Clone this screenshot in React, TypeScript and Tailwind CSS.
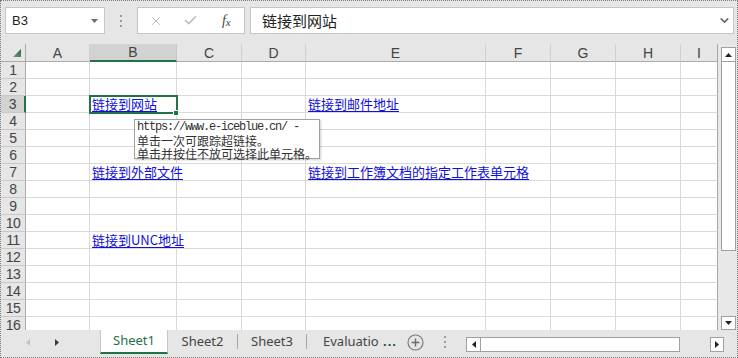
import { Check, X, ChevronDown } from "lucide-react";

const COLS = [
  { key: "A", w: "w-[64px]" },
  { key: "B", w: "w-[87px]" },
  { key: "C", w: "w-[65px]" },
  { key: "D", w: "w-[64px]" },
  { key: "E", w: "w-[180px]" },
  { key: "F", w: "w-[65px]" },
  { key: "G", w: "w-[65px]" },
  { key: "H", w: "w-[65px]" },
  { key: "I", w: "w-[37px]" },
];

// hyperlink cells, keyed by row then column
const LINKS: Record<number, Record<string, string>> = {
  3: { B: "链接到网站", E: "链接到邮件地址" },
  7: { B: "链接到外部文件", E: "链接到工作簿文档的指定工作表单元格" },
  11: { B: "链接到UNC地址" },
};

const ROWS = Array.from({ length: 16 }, (_, i) => i + 1);

function VDots() {
  return (
    <div className="flex flex-col items-center gap-[3px]">
      <span className="h-[2px] w-[2px] bg-[#9a9a9a]" />
      <span className="h-[2px] w-[2px] bg-[#9a9a9a]" />
      <span className="h-[2px] w-[2px] bg-[#9a9a9a]" />
    </div>
  );
}

function Tri({ dir, color }: { dir: "up" | "down" | "left" | "right"; color: string }) {
  const pts = {
    up: "0,4 7,4 3.5,0",
    down: "0,0 7,0 3.5,4",
    left: "4,0 4,7 0,3.5",
    right: "0,0 0,7 4,3.5",
  }[dir];
  const horiz = dir === "left" || dir === "right";
  return (
    <svg width={horiz ? 4 : 7} height={horiz ? 7 : 4} viewBox={horiz ? "0 0 4 7" : "0 0 7 4"}>
      <polygon points={pts} fill={color} />
    </svg>
  );
}

function FormulaBar() {
  return (
    <div className="flex h-[43px] items-start pt-[6px]">
      <div className="ml-[4px] flex h-[27px] w-[100px] items-center justify-between border border-[#c6c6c6] bg-white pl-[6px] pr-[6px]">
        <span className="text-[13px] text-[#222]">B3</span>
        <Tri dir="down" color="#6b6b6b" />
      </div>
      <div className="flex h-[27px] w-[32px] items-center justify-center">
        <VDots />
      </div>
      <div className="flex h-[27px] w-[108px] items-center border border-[#c6c6c6] bg-white">
        <div className="flex w-[36px] justify-center">
          <X size={14} strokeWidth={1.4} color="#a8a8a8" />
        </div>
        <div className="flex w-[36px] justify-center">
          <Check size={15} strokeWidth={2.6} color="#bdbdbd" />
        </div>
        <div className="flex w-[36px] justify-center font-['Liberation_Serif',serif] italic text-[#444]">
          <span className="text-[14px] leading-none">f</span>
          <span className="mt-[3px] text-[11px] leading-none">x</span>
        </div>
      </div>
      <div className="ml-[5px] flex h-[27px] w-[484px] items-center justify-between border border-[#c6c6c6] bg-white pl-[11px] pr-[2px]">
        <span className="font-['Noto_Sans_CJK_SC',sans-serif] text-[15px] leading-none text-[#222]">
          链接到网站
        </span>
        <ChevronDown size={13} strokeWidth={3} color="#6a6a6a" />
      </div>
    </div>
  );
}

function Grid() {
  return (
    <div className="h-full w-[717px] overflow-hidden bg-white">
      <div className="flex h-[18px] bg-[#e6e6e6]">
        <div className="flex h-full w-[25px] items-start border-r border-b border-[#ababab]">
          <svg width="24" height="17" viewBox="0 0 24 17">
            <defs>
              <linearGradient id="corner" x1="0" y1="1" x2="1" y2="0">
                <stop offset="0" stopColor="#6f9a7c" />
                <stop offset="1" stopColor="#1e6b3c" />
              </linearGradient>
            </defs>
            <polygon points="20,5 20,13 12,13" fill="url(#corner)" />
          </svg>
        </div>
        {COLS.map((c) => (
          <div
            key={c.key}
            className={`${c.w} flex h-full items-center justify-center text-[14px] leading-none text-[#444] ${
              c.key === "B"
                ? "border-r border-r-[#c8c8c8] border-b-2 border-b-[#217346] bg-[#d2d2d2]"
                : c.key === "I"
                  ? "border-r border-r-[#a6a6a6] border-b border-b-[#ababab]"
                  : "border-r border-r-[#d0d0d0] border-b border-b-[#ababab]"
            }`}
          >
            {c.key}
          </div>
        ))}
      </div>
      {ROWS.map((r) => (
        <div key={r} className="flex h-[17px]">
          <div
            className={`flex h-full w-[25px] items-center justify-center border-b border-[#c8c8c8] text-[14px] leading-none tracking-[-0.5px] text-[#444] ${
              r === 3 ? "border-r-2 border-r-[#217346] bg-[#d2d2d2]" : "border-r border-r-[#ababab] bg-[#e6e6e6]"
            }`}
          >
            {r}
          </div>
          {COLS.map((c) => {
            const text = LINKS[r]?.[c.key];
            return (
              <div
                key={c.key}
                className={`${c.w} h-full border-b border-r border-b-[#d9d9d9] ${
                  c.key === "I" ? "border-r-[#a6a6a6]" : "border-r-[#d9d9d9]"
                }`}
              >
                {text && (
                  <div className="relative z-10 h-[16px] w-max whitespace-nowrap bg-white pl-[2px] pr-[1px] font-['Noto_Sans_CJK_SC',sans-serif] text-[13px] leading-[16px] text-[#1010d8] underline underline-offset-[2px]">
                    {text}
                  </div>
                )}
              </div>
            );
          })}
        </div>
      ))}
    </div>
  );
}

function VScroll() {
  return (
    <div className="flex h-full w-[19px] flex-col bg-[#e8e8e8] pl-[3px] pt-[3px]">
      <div className="flex h-[15px] w-[15px] items-center justify-center border border-[#a0a0a0] bg-white">
        <Tri dir="up" color="#222" />
      </div>
      <div className="h-[189px] w-[15px] border-x border-b border-[#a0a0a0] bg-white" />
      <div className="flex-1" />
      <div className="flex h-[14px] w-[15px] items-center justify-center border border-[#a0a0a0] bg-white">
        <Tri dir="down" color="#222" />
      </div>
    </div>
  );
}

function TabBar() {
  return (
    <div className="flex h-[27px] items-start font-['Noto_Sans',sans-serif] text-[13px]">
      <div className="flex h-[24px] w-[99px] items-center pl-[25px]">
        <Tri dir="left" color="#c2c2c2" />
        <div className="ml-[25px]">
          <Tri dir="right" color="#3a3a3a" />
        </div>
      </div>
      <div className="flex h-[24px] w-[68px] items-center justify-center border-x border-[#c6c6c6] border-b-2 border-b-[#217346] bg-white text-[#217346]">
        Sheet1
      </div>
      <div className="flex h-[24px] w-[69px] items-center justify-center text-[#444]">Sheet2</div>
      <div className="mt-[4px] h-[15px] w-px bg-[#a8a8a8]" />
      <div className="flex h-[24px] w-[68px] items-center justify-center text-[#444]">Sheet3</div>
      <div className="mt-[4px] h-[15px] w-px bg-[#a8a8a8]" />
      <div className="flex h-[24px] w-[93px] items-center pl-[16px] text-[#444]">
        <span className="w-[56px] overflow-hidden whitespace-nowrap">Evaluation Warning</span>
        <span className="ml-[4px] font-bold tracking-[1px] text-[#2b4a3a]">...</span>
      </div>
      <div className="flex h-[24px] w-[30px] items-center justify-center">
        <svg width="17" height="17" viewBox="0 0 17 17">
          <circle cx="8.5" cy="8.5" r="7.5" fill="none" stroke="#7a7a7a" strokeWidth="1.2" />
          <path d="M8.5 4.5v8M4.5 8.5h8" stroke="#6a6a6a" strokeWidth="1.4" />
        </svg>
      </div>
      <div className="flex h-[24px] w-[29px] items-center justify-center">
        <VDots />
      </div>
      <div className="ml-[7px] mt-[7px] flex h-[15px] w-[258px] items-stretch">
        <div className="flex w-[15px] items-center justify-center border border-[#a0a0a0] bg-white">
          <Tri dir="left" color="#222" />
        </div>
        <div className="w-[199px] border-y border-r border-[#a0a0a0] bg-white" />
        <div className="flex-1" />
        <div className="flex w-[14px] items-center justify-center border border-[#a0a0a0] bg-white">
          <Tri dir="right" color="#222" />
        </div>
      </div>
    </div>
  );
}

export default function App() {
  return (
    <div className="relative flex h-[358px] w-[738px] flex-col overflow-hidden border border-dotted border-[#7a7a7a] bg-[#e6e6e6] font-['Liberation_Sans',sans-serif]">
      <FormulaBar />
      <div className="flex h-[286px]">
        <Grid />
        <VScroll />
      </div>
      <TabBar />

      {/* active cell B3 */}
      <div className="pointer-events-none absolute left-[88px] top-[94px] z-20 h-[19px] w-[89px] border-2 border-[#217346]" />
      <div className="absolute left-[172px] top-[109px] z-20 h-[6px] w-[6px] border border-white bg-[#217346]" />

      {/* hyperlink tooltip */}
      <div className="absolute left-[133px] top-[118px] z-30 h-[40px] w-[186px] border border-[#a0a0a0] bg-white pl-[2px] pt-[1px] text-[#333] shadow-[1px_1px_2px_rgba(0,0,0,0.2)]">
        <div className="font-['Liberation_Mono',monospace] text-[12px] leading-[13px] tracking-[-1.2px]">
          https://www.e-iceblue.cn/ -
        </div>
        <div className="font-['Noto_Sans_CJK_SC',sans-serif] text-[12px] leading-[13px]">单击一次可跟踪超链接。</div>
        <div className="font-['Noto_Sans_CJK_SC',sans-serif] text-[12px] leading-[13px]">单击并按住不放可选择此单元格。</div>
      </div>
    </div>
  );
}
